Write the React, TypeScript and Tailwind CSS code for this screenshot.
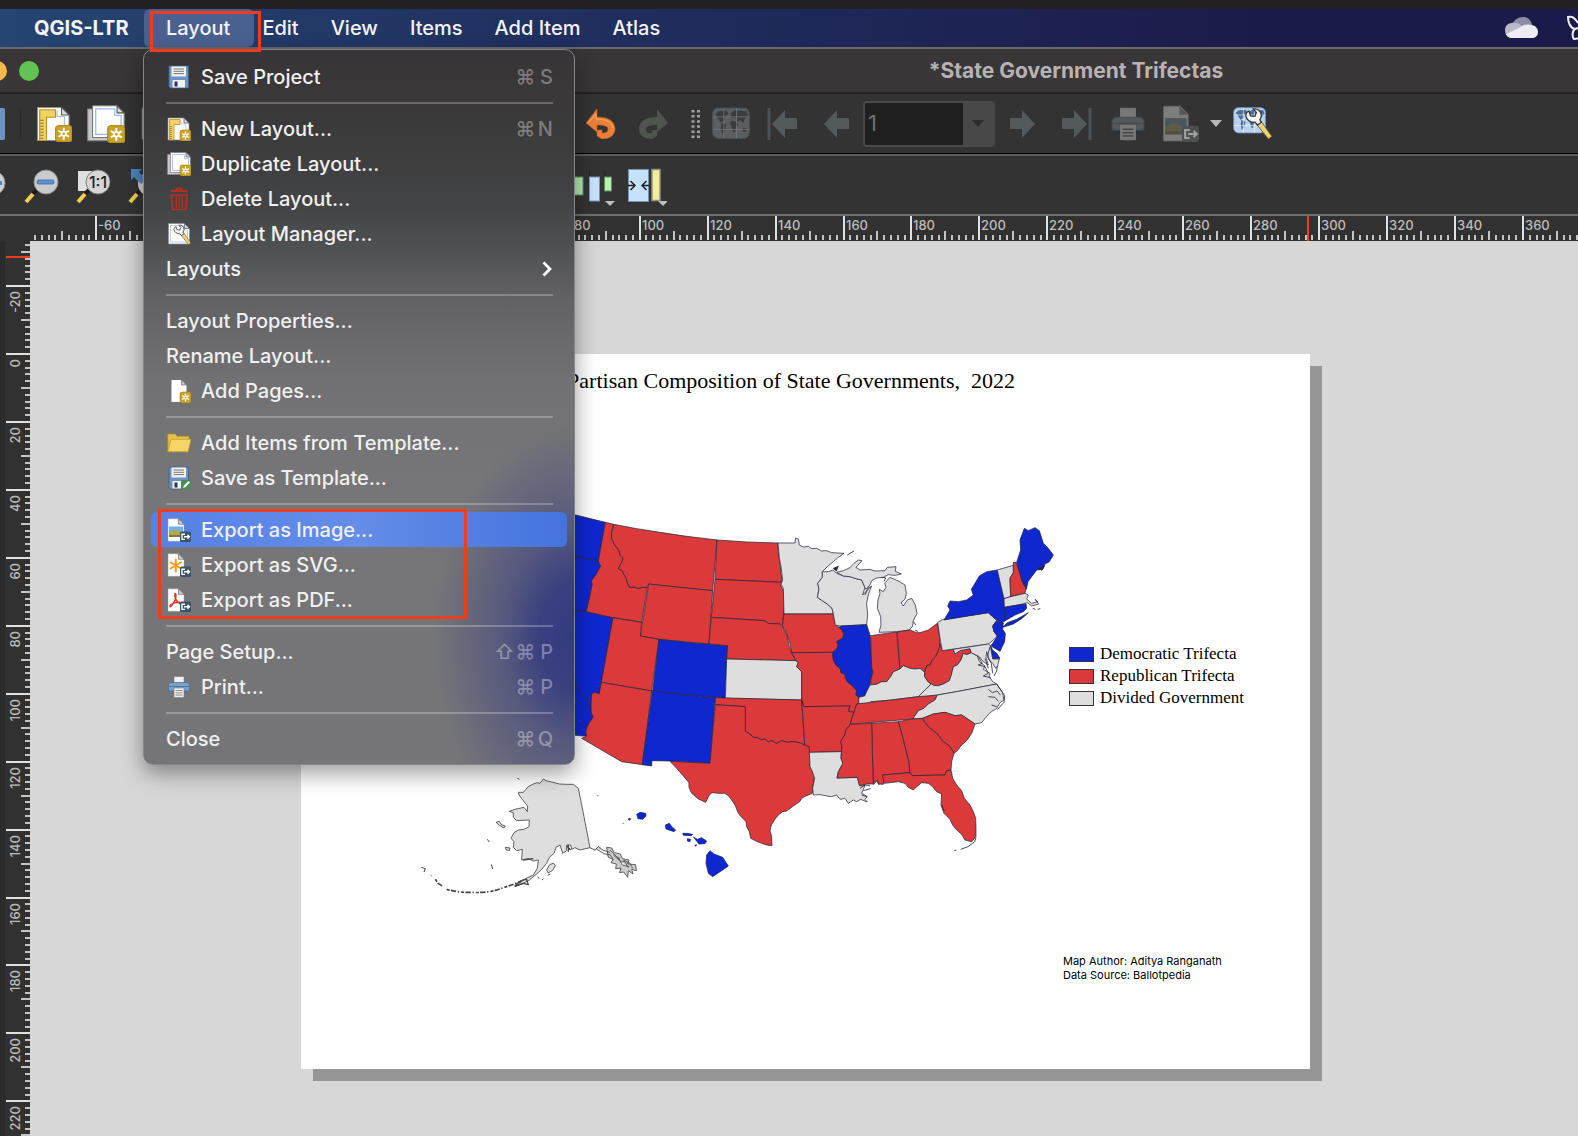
import React, { useEffect, useState } from "react";

type SvgProps = { className?: string; children?: React.ReactNode };

function Icon({ className = "size-6", children }: SvgProps) {
  return (
    <svg viewBox="0 0 24 24" className={className} aria-hidden="true">
      {children}
    </svg>
  );
}

function StarBadge() {
  return (
    <g>
      <rect x="13" y="13" width="11" height="11" rx="2" fill="#c9a227" stroke="#a98414" strokeWidth=".6" />
      <path d="M18.500 14.500v8M15 16.500l7 4M22 16.500l-7 4" stroke="#fff" strokeWidth="1.300" />
      <circle cx="18.500" cy="18.500" r="2" fill="#fff" />
      <circle cx="18.500" cy="18.500" r=".9" fill="#c9a227" />
    </g>
  );
}

function ExportBadge({ muted = false }: { muted?: boolean }) {
  return (
    <g>
      <rect x="13" y="13.500" width="11" height="10.500" rx="1.500" fill={muted ? "#4d4f50" : "#3b5468"} />
      <path
        d="M18 16.200h-3v5.200h3M17 18.800h5.500M20.500 16.800l2 2-2 2"
        fill="none"
        stroke={muted ? "#a0a0a0" : "#fff"}
        strokeWidth="1.400"
      />
    </g>
  );
}

function SaveIcon({ className, template = false }: { className?: string; template?: boolean }) {
  return (
    <Icon className={className}>
      <path d="M2 1h19.500v22H3.500L2 21.500z" fill="#6d93c3" stroke="#40608c" strokeWidth=".8" />
      <rect x="4.500" y="1.500" width="14.500" height="10" fill="#f2f2f2" />
      <path d="M6.500 4h10.500M6.500 6.300h10.500M6.500 8.600h10.500" stroke="#777" strokeWidth="1" />
      <rect x="5.500" y="15" width="12.500" height="7.500" fill="#f2f2f2" />
      <rect x="7.500" y="16.500" width="3" height="5" fill="#23395a" />
      {template && (
        <g>
          <rect x="14" y="14" width="10" height="10" rx="1.500" fill="#4c8a57" />
          <path d="M16 22l1-2.500 4.500-4.500 1.500 1.500-4.500 4.500z" fill="#fff" />
        </g>
      )}
    </Icon>
  );
}

function NewLayoutIcon({ className }: { className?: string }) {
  return (
    <Icon className={className}>
      <path d="M1 1h16l5 5v17H1z" fill="#fff" stroke="#8a8a8a" strokeWidth=".7" />
      <path d="M14 3v4h5v10" fill="none" stroke="#a9c3ee" strokeWidth=".8" />
      <path d="M17 1v5h5z" fill="#d8d8d8" stroke="#555" strokeWidth=".7" />
      <path d="M2.500 2.500h10.500v5H7v15.500H2.500z" fill="#f3d360" stroke="#b4912a" strokeWidth=".8" />
      <path d="M3 9.500h2M3 11.500h2M3 13.500h2M3 15.500h2M3 17.500h2M3 19.500h2M3 21.500h2" stroke="#8a6c14" strokeWidth=".7" />
      <StarBadge />
    </Icon>
  );
}

function DuplicateIcon({ className }: { className?: string }) {
  return (
    <Icon className={className}>
      <path d="M.5 2.500h17v20H.5z" fill="#c9c9c9" stroke="#888" strokeWidth=".7" />
      <path d="M3.500.5h15.500l4.500 4.500v15.500H3.500z" fill="#fff" stroke="#777" strokeWidth=".7" />
      <path d="M5.500 2.500h12v4h4v12h-16z" fill="none" stroke="#9db9ec" strokeWidth=".8" />
      <path d="M19 .5V5h4.500z" fill="#d8d8d8" stroke="#555" strokeWidth=".7" />
      <StarBadge />
    </Icon>
  );
}

function TrashIcon() {
  return (
    <Icon>
      <path d="M4 4h16.500M9 3.500l1.500-2h3.500l1.500 2" fill="none" stroke="#b5301f" strokeWidth="2" />
      <path d="M4.500 8h15.500l-1 14.500H5.500z" fill="none" stroke="#b5301f" strokeWidth="1.700" />
      <path d="M9.300 9v12M12.300 9v12M15.300 9v12" stroke="#b5301f" strokeWidth="1.400" />
    </Icon>
  );
}

function Wrench() {
  return (
    <g>
      <path d="M13.500 12.500l8 10 2.300-1.600-7.500-10.500z" fill="#ecd27a" stroke="#6b5a20" strokeWidth=".6" />
      <path
        d="M9 4.500l1 3.200 2.800.3 1-2.500-2-2.300c3-.4 5 1.300 5.200 4 0 1.300-.4 2.200-1 3l1 1.500-2.500 1.900-1.400-1.700C10 12 7.200 10.200 7 7.500c0-1.300.8-2.500 2-3z"
        fill="#f4f4f4"
        stroke="#333"
        strokeWidth=".8"
      />
    </g>
  );
}

function ManagerIcon({ className }: { className?: string }) {
  return (
    <Icon className={className}>
      <path d="M1.500 1.500h16l5 5v15.500h-21z" fill="#fff" stroke="#8a8a8a" strokeWidth=".7" />
      <path d="M3.500 3.500h13v4.500h4v12h-17z" fill="none" stroke="#a9c3ee" strokeWidth=".8" />
      <path d="M17.500 1.500v5h5z" fill="#d8d8d8" stroke="#555" strokeWidth=".7" />
      <Wrench />
    </Icon>
  );
}

function AddPagesIcon() {
  return (
    <Icon>
      <path d="M4.500 1h10l5 5v17h-15z" fill="#fff" />
      <path d="M14.500 1v5h5z" fill="#d0d0d0" stroke="#666" strokeWidth=".7" />
      <StarBadge />
    </Icon>
  );
}

function FolderIcon() {
  return (
    <Icon>
      <path d="M.8 20.500V3h7.500l2 2.300H22v3" fill="#e6c24d" stroke="#b28f25" strokeWidth=".8" />
      <path d="M.8 20.800L4 8.300h20l-3 12.500z" fill="#f4d566" stroke="#c19c2c" strokeWidth=".8" />
    </Icon>
  );
}

function ExportIcon({ kind, className, muted = false }: { kind: string; className?: string; muted?: boolean }) {
  return (
    <Icon className={className}>
      <path d="M1 .8h10.500l5.500 5.500v17H1z" fill={muted ? "#7d7d7d" : "#fff"} stroke={muted ? "#666" : "#999"} strokeWidth=".5" />
      <path d="M11.500.8v5.500H17z" fill={muted ? "#555" : "#d0d0d0"} stroke="#666" strokeWidth=".7" />
      {kind === "image" && (
        <g>
          <rect x="2" y="8.500" width="14" height="10.500" fill={muted ? "#4b565b" : "#6fb1e8"} />
          <path d="M2 14.500l5-3 4 1.500 5 1v5H2z" fill={muted ? "#5d5c4a" : "#b6a548"} />
          <path d="M2 17h14v2H2z" fill={muted ? "#4f5148" : "#76803c"} />
        </g>
      )}
      {kind === "svg" && (
        <path
          d="M8.800 6.500v12M3.600 9.500l10.400 6M14 9.500l-10.400 6"
          stroke="#f29a1b"
          strokeWidth="2"
          strokeLinecap="round"
        />
      )}
      {kind === "pdf" && (
        <path
          d="M8 5.500c2 0 .8 6-1.500 9.500-2 3.500-3.800 4.500-3.600 3 .4-2 5-4 9-3.800 3.500.3 3 2 1 1.500C9.500 14.500 7 8 8 5.500z"
          fill="none"
          stroke="#dc3422"
          strokeWidth="1.400"
        />
      )}
      <ExportBadge muted={muted} />
    </Icon>
  );
}

function PrintIcon({ className, muted = false }: { className?: string; muted?: boolean }) {
  const paper = muted ? "#787878" : "#f2f2f2";
  return (
    <Icon className={className}>
      <rect x="7" y="1.500" width="10" height="7" fill={paper} stroke="#777" strokeWidth=".6" />
      <path d="M3.500 7.500h17l2 2v6.500h-21V9.500z" fill={muted ? "#54585b" : "#7ba0cc"} stroke={muted ? "#484b4d" : "#466a97"} strokeWidth=".7" />
      <path d="M2 11.500h20" stroke={muted ? "#484b4d" : "#4f76a5"} strokeWidth="1" />
      <rect x="7" y="13" width="10" height="9.500" fill={paper} stroke="#777" strokeWidth=".6" />
      <path d="M8.500 15.500h7M8.500 17.800h7M8.500 20h7" stroke={muted ? "#444" : "#888"} strokeWidth="1" />
    </Icon>
  );
}

type Entry = { label: string; icon?: React.ReactNode; mods?: string; char?: string; sub?: boolean; active?: boolean };

const groups: Entry[][] = [
  [{ label: "Save Project", icon: <SaveIcon />, mods: "⌘", char: "S" }],
  [
    { label: "New Layout...", icon: <NewLayoutIcon />, mods: "⌘", char: "N" },
    { label: "Duplicate Layout...", icon: <DuplicateIcon /> },
    { label: "Delete Layout...", icon: <TrashIcon /> },
    { label: "Layout Manager...", icon: <ManagerIcon /> },
    { label: "Layouts", sub: true },
  ],
  [{ label: "Layout Properties..." }, { label: "Rename Layout..." }, { label: "Add Pages...", icon: <AddPagesIcon /> }],
  [
    { label: "Add Items from Template...", icon: <FolderIcon /> },
    { label: "Save as Template...", icon: <SaveIcon template /> },
  ],
  [
    { label: "Export as Image...", icon: <ExportIcon kind="image" />, active: true },
    { label: "Export as SVG...", icon: <ExportIcon kind="svg" /> },
    { label: "Export as PDF...", icon: <ExportIcon kind="pdf" /> },
  ],
  [
    { label: "Page Setup...", mods: "⇧⌘", char: "P" },
    { label: "Print...", icon: <PrintIcon />, mods: "⌘", char: "P" },
  ],
  [{ label: "Close", mods: "⌘", char: "Q" }],
];

function MenuItem({ item }: { item: Entry }) {
  return (
    <button
      role="menuitem"
      className={
        "flex h-[35px] w-full items-center gap-[10px] rounded-md pl-[15px] pr-[14px] text-left " +
        (item.active ? "bg-linear-to-r from-[#5681e6] via-[#648de8] to-[#4573dd]" : "")
      }
    >
      {item.icon && <span className="flex w-[25px] shrink-0 justify-center">{item.icon}</span>}
      <span className="flex-1 whitespace-nowrap">{item.label}</span>
      {item.char && (
        <span className="flex items-center text-white/35">
          {Array.from(item.mods ?? "").map((m) => (
            <span key={m} className="w-[21px] text-center">
              {m}
            </span>
          ))}
          <span className="w-[17px] text-right">{item.char}</span>
        </span>
      )}
      {item.sub && (
        <svg viewBox="0 0 12 16" className="h-4 w-3" aria-hidden="true">
          <path d="M2.500 1.500L9 8l-6.500 6.500" fill="none" stroke="#fff" strokeWidth="2.800" />
        </svg>
      )}
    </button>
  );
}

function LayoutMenu() {
  return (
    <div
      role="menu"
      className="absolute -left-[7px] top-10 z-20 w-[432px] rounded-[10px] border border-[#85858a] bg-[radial-gradient(ellipse_140px_210px_at_100%_82%,#343a80_0%,#3a407f_25%,rgba(75,78,128,0.7)_52%,rgba(119,119,121,0)_100%),linear-gradient(to_bottom,#383437_0%,#3b3a3a_10%,#434446_22%,#505153_28%,#626264_35%,#717173_46%,#767678_60%,#757577_100%)] px-[7px] pb-2 pt-[9px] text-[20px] font-medium leading-6 text-[#f0f0f0] shadow-[0_8px_22px_rgba(0,0,0,0.4)]"
    >
      {groups.map((g, i) => (
        <div key={i}>
          {i > 0 && <div role="separator" className="mb-[7px] ml-[15px] mr-[14px] mt-2 h-[2px] bg-white/25" />}
          <div className="relative">
            {g.map((item) => (
              <MenuItem key={item.label} item={item} />
            ))}
            {i === 4 && <div className="pointer-events-none absolute -top-[3px] left-[7px] h-[110px] w-[309px] border-3 border-[#ee3d1d]" />}
          </div>
        </div>
      ))}
    </div>
  );
}

function MenuBar() {
  return (
    <header className="flex h-[38px] items-center bg-linear-to-r from-[#264570] via-[#20305f] via-35% to-[#1b1b4b] to-80% text-[20px] font-medium leading-6 text-[#f4f4f6]">
      <button className="w-[150px] shrink-0 whitespace-nowrap pl-[34px] text-left font-bold">QGIS-LTR</button>
      <div className="relative flex h-full items-center">
        <div className="absolute -left-[6px] top-0 h-full w-[110px] rounded-md bg-[#4a6190]" />
        <button className="relative px-4" aria-expanded="true">
          Layout
        </button>
        <div className="absolute left-0 top-[2px] z-30 h-[41px] w-[111px] border-3 border-[#ee3d1d]" />
        <LayoutMenu />
      </div>
      {["Edit", "View", "Items", "Add Item", "Atlas"].map((m) => (
        <button key={m} className="whitespace-nowrap px-4">
          {m}
        </button>
      ))}
      <div className="ml-auto flex items-center gap-7">
        <svg viewBox="0 0 33 22" className="h-[22px] w-[33px]" aria-label="OneDrive">
          <path d="M7 9C8 3 13 0 18 0c5 0 8 3 9 8L17 14z" fill="#8b8ca5" />
          <path d="M7 6c4-1 8 1 10 3l10 7-20 5C2 21 0 17 0 13c0-4 3-7 7-7z" fill="#b9b9c8" />
          <path d="M16 10c3-3 8-3 11-2 4 1 6 4 6 7 0 4-3 6-6 6H7c-3 0-5-2-6-4z" fill="#ececf1" />
        </svg>
        <svg viewBox="0 0 12 26" className="h-[26px] w-3" aria-hidden="true">
          <path d="M12 8C9 3 5 1 2 2c0 5 2 11 7 12-3 2-3 8-1 10 2 0 3 0 4-1M9 14l3-1" fill="none" stroke="#f0f0f4" strokeWidth="2" />
        </svg>
      </div>
    </header>
  );
}

function Slot({ label, children, className = "w-[52px]" }: { label: string; children: React.ReactNode; className?: string }) {
  return (
    <button aria-label={label} className={"flex h-full shrink-0 items-center justify-center " + className}>
      {children}
    </button>
  );
}

function MapTile({ muted = false }: { muted?: boolean }) {
  const land = muted ? "#3a3d3f" : "#4a6c96";
  return (
    <g>
      <rect x=".5" y="2" width="23" height="19" rx="3.500" fill={muted ? "#5b5e60" : "#b9d2ef"} stroke={muted ? "#515456" : "#6f93bf"} strokeWidth=".6" />
      <path d="M2 6l2-2 5-.5 1.500 2-2 1.500-1 3-2 1-2-3zM6 11l3 1.500-.5 3-2 3.500-1-4zM12 5l2-1.500 8 .5 1 3-2.500 2-.5 2.500-2-2-2 1-2-3-2 1zM12 10l3.500.5 1 2-1.500 2-.5 3-1.500-1-.5-3-1-1zM19.500 14.500l2.500.5-.5 2-2.500-.5z" fill={land} />
      <path d="M7.500 2v19M15.500 2v19M.5 7.500h23M.5 15.500h23" stroke={muted ? "#75787a" : "#eef5fd"} strokeWidth=".5" />
    </g>
  );
}

function AtlasSettingsIcon() {
  return (
    <svg viewBox="0 0 40 38" className="h-[38px] w-10" aria-hidden="true">
      <g transform="translate(1 0) scale(1.380 1.330)">
        <MapTile />
      </g>
      <g transform="translate(3 -1) scale(1.550)">
        <Wrench />
      </g>
    </svg>
  );
}

function Arrow({ flip = false, bar = false }: { flip?: boolean; bar?: boolean }) {
  return (
    <svg viewBox="0 0 32 34" className={"h-[34px] w-8 " + (flip ? "-scale-x-100" : "")} aria-hidden="true">
      {bar && <path d="M2 1v32" stroke="#4d5154" strokeWidth="3" />}
      <path d="M5 17L18 3v8h12v11H18v9z" fill="#54595c" />
    </svg>
  );
}

function Caret() {
  return (
    <svg viewBox="0 0 12 7" className="h-[7px] w-3" aria-hidden="true">
      <path d="M0 0h12L6 7z" fill="currentColor" />
    </svg>
  );
}

function MainToolbar() {
  return (
    <div className="flex h-[60px] shrink-0 items-center border-b border-black bg-[#333]">
      <div className="flex h-full w-[575px] shrink-0 items-center overflow-hidden">
        <div className="h-8 w-[5px] rounded-r-xs bg-[#6d93c3]" />
        <div className="ml-[15px] mr-[7px] h-8 w-px bg-[#292929]" />
        <Slot label="New layout"><NewLayoutIcon className="size-9" /></Slot>
        <Slot label="Duplicate layout"><DuplicateIcon className="size-[38px]" /></Slot>
        <Slot label="Layout manager"><ManagerIcon className="size-9" /></Slot>
      </div>
      <Slot label="Undo">
        <svg viewBox="0 0 30 30" className="size-[30px]" aria-hidden="true">
          <path d="M0 14L11 0v8c11 0 18 4 18 12 0 6-5 10-13 10l-5-3v-6h5v3c4 0 6-1 6-4s-4-4-11-4v7z" fill="#e9803a" stroke="#c45f1e" strokeWidth=".6" />
          <path d="M2 14l8-9v5c10 0 16 3 17 9" fill="none" stroke="#f6ad78" strokeWidth="1" />
        </svg>
      </Slot>
      <Slot label="Redo">
        <svg viewBox="0 0 30 30" className="size-[30px] -scale-x-100" aria-hidden="true">
          <path d="M0 14L11 0v8c11 0 18 4 18 12 0 6-5 10-13 10l-5-3v-6h5v3c4 0 6-1 6-4s-4-4-11-4v7z" fill="#50544f" />
        </svg>
      </Slot>
      <div className="flex w-[26px] shrink-0 justify-end pr-1">
        <svg viewBox="0 0 10 28" className="h-7 w-[10px]" aria-hidden="true">
          <path d="M2 0v28M7.500 0v28" stroke="#a0a0a0" strokeWidth="3" strokeDasharray="2.500 2.600" />
        </svg>
      </div>
      <Slot label="Preview atlas"><Icon className="size-[38px]"><MapTile muted /></Icon></Slot>
      <Slot label="First feature"><Arrow bar /></Slot>
      <Slot label="Previous feature"><Arrow /></Slot>
      <div className="relative ml-0.5 flex h-[46px] w-[132px] shrink-0 overflow-hidden rounded-sm border-2 border-[#4a4a4a] bg-[#1f1f1f]">
        <select aria-label="Atlas page" className="w-full appearance-none bg-transparent px-[3px] text-[22px] text-[#6f6f6f]">
          <option>1</option>
        </select>
        <span className="pointer-events-none absolute inset-y-0 right-0 flex w-[30px] items-center justify-center bg-[#484848] text-[#2c2c2c]">
          <Caret />
        </span>
      </div>
      <div className="w-[3px] shrink-0" />
      <Slot label="Next feature"><Arrow flip /></Slot>
      <Slot label="Last feature"><Arrow flip bar /></Slot>
      <Slot label="Print atlas"><PrintIcon className="size-9" muted /></Slot>
      <Slot label="Export atlas"><ExportIcon kind="image" className="size-[37px]" muted /></Slot>
      <Slot label="Export options" className="w-5 text-[#b8b8b8]"><Caret /></Slot>
      <Slot label="Atlas settings"><AtlasSettingsIcon /></Slot>
    </div>
  );
}

function Lens({ children }: { children: React.ReactNode }) {
  return (
    <svg viewBox="0 0 36 36" className="size-9" aria-hidden="true">
      {children}
    </svg>
  );
}

function NavToolbar() {
  return (
    <div className="flex h-[58px] shrink-0 items-center bg-[#333] pt-[3px]">
      <div className="flex h-full w-[575px] shrink-0 items-center overflow-hidden">
        <div className="w-[15px] shrink-0">
          <svg viewBox="0 0 15 36" className="h-9 w-[15px]" aria-hidden="true">
            <circle cx="-7" cy="14" r="12" fill="#d0d0d0" stroke="#8b8b8b" />
            <path d="M-14 14H2" stroke="#4b83c4" strokeWidth="4" />
          </svg>
        </div>
        <Slot label="Zoom out">
          <Lens>
            <path d="M14 21l-4 4" stroke="#1c1c1c" strokeWidth="4" />
            <path d="M10 25l-7 8" stroke="#f0cf4e" strokeWidth="4" />
            <circle cx="23" cy="13" r="12" fill="#c9cacb" stroke="#8d8d8d" />
            <rect x="14" y="11" width="17" height="4" rx="1.500" fill="#5d92cd" stroke="#3b6ca3" strokeWidth=".8" />
          </Lens>
        </Slot>
        <Slot label="Zoom to 100%">
          <Lens>
            <path d="M3 2h14v20H3z" fill="#e0e0e0" />
            <path d="M14 21l-4 4" stroke="#1c1c1c" strokeWidth="4" />
            <path d="M10 25l-7 8" stroke="#f0cf4e" strokeWidth="4" />
            <circle cx="23" cy="13" r="12" fill="#d6d6d6" stroke="#7d7d7d" />
            <text x="23" y="19" textAnchor="middle" fontSize="16" fontWeight="500" fill="#222">1:1</text>
          </Lens>
        </Slot>
        <Slot label="Zoom full">
          <Lens>
            <path d="M14 21l-4 4" stroke="#1c1c1c" strokeWidth="4" />
            <path d="M10 25l-7 8" stroke="#f0cf4e" strokeWidth="4" />
            <circle cx="23" cy="15" r="12" fill="#d0d0d0" />
            <path d="M4-1h12l-4 4 7 7-5 5-7-7-3 3z" fill="#4f86c0" />
          </Lens>
        </Slot>
      </div>
      <Slot label="Distribute items" className="w-11">
        <svg viewBox="0 0 44 38" className="h-[38px] w-11" aria-hidden="true">
          <path d="M14.500 2v34M30 2v20" stroke="#222" strokeWidth="1" />
          <rect x="-4" y="9" width="12" height="18" fill="#b3e8b0" stroke="#5d8f5d" />
          <rect x="14.500" y="9" width="10" height="24" fill="#c5e2fa" stroke="#7296b8" />
          <rect x="29.500" y="9" width="7" height="14" fill="#b3f5b0" stroke="#5d8f5d" />
          <path d="M30 33h10l-5 5z" fill="#c0c0c0" />
        </svg>
      </Slot>
      <Slot label="Resize items" className="w-[52px]">
        <svg viewBox="0 0 44 38" className="h-[38px] w-11" aria-hidden="true">
          <rect x="5.500" y="1.500" width="20" height="32" fill="#c5e2fa" stroke="#7296b8" />
          <path d="M5 17.500h7M7.500 13l4.500 4.500-4.500 4.500M26 17.500h-7M23.500 13L19 17.500l4.500 4.500" fill="none" stroke="#222" strokeWidth="1.500" />
          <rect x="29" y="1.500" width="8" height="31" fill="#f0f09a" stroke="#9a8f86" strokeWidth="1.500" />
          <path d="M35 33h10l-5 5z" fill="#c0c0c0" />
        </svg>
      </Slot>
    </div>
  );
}

const SCALE = 3.397;

function useWindowSize() {
  const [size, setSize] = useState({ width: window.innerWidth, height: window.innerHeight });
  useEffect(() => {
    const update = () => setSize({ width: window.innerWidth, height: window.innerHeight });
    window.addEventListener("resize", update);
    return () => window.removeEventListener("resize", update);
  }, []);
  return size;
}

function ticks(from: number, to: number) {
  const out: number[] = [];
  for (let v = from; v <= to; v += 2) out.push(v);
  return out;
}

function HorizontalRuler() {
  const { width } = useWindowSize();
  return (
    <div className="h-[25px] shrink-0 overflow-hidden bg-[#313131] pl-[6px]">
      <svg className="h-[25px] w-full" aria-label="Horizontal ruler">
        {ticks(-78, (width - 300) / SCALE).map((v) => {
          const x = Math.round(293 + v * SCALE);
          const major = v % 20 === 0;
          const top = major ? 0 : v % 10 === 0 ? 15 : 19;
          return (
            <g key={v}>
              <rect x={x} y={top} width={2} height={24 - top} fill={major ? "#e0e0e0" : "#c4c4c4"} />
              {major && (
                <text x={x + 3} y={14} fontSize={13} fontWeight={500} fill="#bdbdbd">
                  {v}
                </text>
              )}
            </g>
          );
        })}
        <rect x="1301" y="0" width="2" height="25" fill="#ee3d1d" />
      </svg>
    </div>
  );
}

function VerticalRuler() {
  const { height } = useWindowSize();
  return (
    <div className="w-[30px] shrink-0 overflow-hidden border-l-[5px] border-[#2b2b2b] bg-[#313131]">
      <svg className="h-full w-[25px]" aria-label="Vertical ruler">
        {ticks(-32, (height - 354) / SCALE).map((v) => {
          const y = Math.round(112 + v * SCALE);
          const major = v % 20 === 0;
          const left = major ? 1 : v % 10 === 0 ? 16 : 20;
          return (
            <g key={v}>
              <rect x={left} y={y} width={25 - left} height={2} fill={major ? "#e0e0e0" : "#c4c4c4"} />
              {major && (
                <text transform={`translate(15 ${y + 6}) rotate(-90)`} textAnchor="end" fontSize={13} fontWeight={500} fill="#bdbdbd">
                  {v}
                </text>
              )}
            </g>
          );
        })}
        <rect x="1" y="15" width="24" height="2" fill="#ee3d1d" />
      </svg>
    </div>
  );
}

const DEM = "#0f27cf";
const REP = "#dc3a3a";
const DIV = "#dedede";

const west: [string, string][] = [
  [DEM, "0,35 47,45 136,67 115,183 47,170 -40,150"],
  [DEM, "-60,148 47,170 115,183 122,198 108,224 100,236 94,243 97,252 79,335 47,330 -60,305"],
  [DEM, "-60,305 47,330 79,335 159,353 124,547 118,581 104,577 95,582 93,618 47,557 -60,420"],
  [DEM, "-60,420 47,557 93,618 94,640 100,650 88,668 82,680 77,695 80,709 47,706 -60,700"],
  [REP, "136,67 161,73 158,88 154,100 156,118 165,136 176,150 180,165 189,175 184,190 175,206 187,212 191,222 199,236 203,250 209,262 222,261 235,265 250,262 262,262 245,367 159,353 79,335 97,252 94,243 108,224 122,198 115,183"],
  [REP, "161,73 230,86 300,97 380,109 471,120 458,272 360,263 266,252 262,262 250,262 235,265 222,261 209,262 203,250 199,236 191,222 187,212 175,206 184,190 189,175 180,165 176,150 165,136 156,118 154,100 158,88"],
  [REP, "266,252 458,272 447,432 297,418 241,408"],
  [REP, "159,353 245,367 241,408 297,418 275,573 124,547"],
  [REP, "124,547 275,573 247,794 185,785 65,715 80,709 77,695 82,680 88,668 100,650 94,640 93,618 95,582 104,577 118,581"],
  [DEM, "297,418 400,429 503,437 495,595 380,585 278,573"],
  [DEM, "277,573 380,585 466,593 450,790 330,783 276,782 275,798 247,794"],
  [REP, "471,120 560,126 654,129 655,155 660,190 663,220 668,247 465,238"],
  [REP, "465,238 668,247 662,256 671,275 671,345 667,375 658,372 640,371 625,370 612,362 454,352"],
  [REP, "454,352 612,362 625,370 640,371 658,372 668,380 676,395 682,410 688,440 695,460 708,482 500,477 503,437 447,432"],
  [DIV, "500,477 708,482 715,486 710,500 725,515 725,600 496,595"],
  [REP, "466,593 725,600 730,670 734,735 718,728 700,725 682,727 665,722 650,730 635,722 625,726 615,717 602,719 592,713 580,712 570,702 556,694 556,620 466,614"],
  [REP, "466,614 556,620 556,694 570,702 580,712 592,713 602,719 615,717 625,726 635,722 650,730 665,722 682,727 700,725 718,728 734,735 748,740 750,797 760,815 764,830 759,855 757,880 738,888 725,895 720,904 700,918 680,933 668,935 655,945 643,960 634,975 630,992 635,1010 636,1037 620,1035 605,1030 590,1024 572,1015 568,995 560,980 558,965 545,952 535,940 525,915 515,900 505,887 495,880 475,880 456,878 448,885 437,907 415,897 395,880 387,862 387,848 370,828 350,805 330,784 450,790"],
];

const east: [string, string][] = [
  [DIV, "24,129 75,129 77,114 85,117 88,135 100,141 115,139 125,146 140,145 155,153 170,152 185,158 222,160 205,172 190,185 172,200 157,215 157,232 143,250 147,268 142,292 158,303 172,312 186,325 190,342 42,342 40,265 33,252 38,240 33,200 28,175"],
  [REP, "42,342 190,342 196,372 207,382 216,390 222,402 218,415 200,425 205,435 200,448 188,457 65,458 60,430 52,405 45,388 37,378"],
  [REP, "65,458 188,457 190,480 198,495 212,507 213,518 225,522 226,533 232,545 250,560 260,572 258,585 267,592 266,610 258,615 252,637 235,634 240,618 102,620 95,600 95,515 80,500 85,488 78,482"],
  [REP, "95,600 102,620 240,618 235,634 252,637 247,650 240,675 228,690 224,705 212,725 216,740 214,755 118,757 118,740 104,735 100,670"],
  [DIV, "118,757 214,755 213,775 219,790 205,815 201,834 262,832 268,850 272,858 285,856 280,868 275,880 292,890 285,898 292,906 272,898 260,905 250,900 235,910 225,895 210,898 200,885 185,890 170,888 150,884 130,885 128,865 134,835 126,812 120,800"],
  [DIV, "157,215 175,215 190,210 200,220 220,228 240,230 258,236 275,240 285,262 278,285 292,270 305,258 296,280 290,310 293,345 290,374 215,378 196,376 190,342 186,325 172,312 158,303 142,292 147,268 143,250 157,232"],
  [DIV, "200,217 220,212 240,203 252,190 265,180 276,182 258,202 270,210 300,208 315,213 345,212 352,202 378,200 376,214 394,222 375,226 355,224 340,232 320,234 305,242 300,255 287,268 275,240 258,236 240,230 220,228"],
  [DIV, "327,397 333,375 332,350 322,325 324,300 330,280 328,268 340,275 348,262 344,250 360,232 385,243 405,255 409,280 405,298 393,308 400,318 412,300 425,295 436,315 441,340 430,362 428,378 418,390 380,395"],
  [DEM, "215,378 290,374 300,405 303,450 305,500 309,518 303,535 300,555 290,575 284,588 267,592 258,585 260,572 250,560 232,545 226,533 225,522 213,518 212,507 198,495 190,480 188,457 200,448 205,435 200,425 218,415 222,402 216,390 207,382"],
  [REP, "302,407 380,396 390,507 370,515 362,530 350,545 335,545 320,553 302,553 303,535 309,518 305,500"],
  [REP, "382,396 420,390 440,398 450,398 475,390 502,370 510,415 508,445 497,470 486,482 480,495 470,497 464,517 450,505 435,507 420,505 400,497 390,507"],
  [DIV, "267,592 284,588 290,575 300,555 320,553 335,545 350,545 362,530 370,515 390,507 400,497 420,505 435,507 450,505 464,517 464,530 475,546 484,552 460,575 445,590 365,600 302,605 300,610 266,612"],
  [REP, "260,612 302,607 365,600 445,590 502,585 495,600 475,612 462,625 445,632 428,657 330,665 241,673 247,650 252,637"],
  [REP, "510,430 517,452 550,448 555,462 570,452 585,448 600,446 604,458 590,464 580,460 573,480 562,495 550,500 544,525 538,542 520,552 505,557 490,556 475,546 464,530 464,517 470,497 480,495 486,482 497,470 508,445"],
  [DIV, "445,590 460,575 484,552 490,556 505,557 520,552 538,542 544,525 550,500 562,495 573,480 580,460 590,464 604,458 622,468 628,485 645,498 640,508 660,520 658,530 668,545 680,552 560,575 502,585"],
  [DIV, "502,585 560,575 680,552 698,578 702,600 690,608 680,625 660,638 645,655 635,668 615,672 575,645 555,647 525,637 490,642 458,655 428,657 445,632 462,625 475,612 495,600"],
  [REP, "458,655 490,642 525,637 555,647 575,645 615,672 605,700 590,722 575,735 562,752 552,760 540,740 520,725 500,700 480,685 465,668"],
  [REP, "385,665 428,657 458,655 465,668 480,685 500,700 520,725 540,740 552,760 545,785 543,810 530,812 525,825 427,827 418,815 416,785 400,720"],
  [REP, "305,670 385,665 400,720 416,785 420,818 337,825 343,842 340,853 325,852 322,840 310,850 307,760"],
  [REP, "241,673 305,670 307,760 310,852 290,852 268,857 262,832 201,834 205,815 219,790 213,775 216,740 212,725 224,705 228,690"],
  [REP, "337,825 420,818 427,827 525,825 530,812 543,810 548,835 560,855 575,872 583,895 600,915 610,935 617,955 618,985 618,1010 605,1025 585,1020 575,1003 560,990 548,975 540,958 522,940 513,915 515,882 500,875 488,860 475,850 455,848 440,860 430,870 415,862 405,850 385,845 343,850"],
  [DIV, "503,367 520,358 655,338 668,350 680,362 668,378 672,395 682,408 670,420 655,432 517,452 510,415"],
  [DEM, "522,360 540,330 533,318 540,303 565,305 590,300 610,285 604,268 615,250 628,228 650,215 682,210 690,245 702,290 703,320 706,362 695,370 668,350 655,338"],
  [DEM, "698,382 712,368 740,358 775,338 755,356 730,372"],
  [DEM, "680,362 700,370 698,388 706,400 704,425 690,454 678,447 663,438 682,408 672,395 668,378"],
  [DEM, "661,437 668,450 680,460 690,475 668,477"],
  [DIV, "550,448 655,432 661,437 668,477 688,477 683,498 677,505 668,490 658,480 650,455 648,472 655,495 640,485 628,470 604,458 600,446 570,452 555,462"],
  [DIV, "682,210 730,196 730,218 720,235 722,290 702,296 690,245"],
  [REP, "730,187 738,187 748,215 757,245 768,262 765,280 722,290 720,235 730,218"],
  [DEM, "740,187 752,150 750,120 763,85 775,92 795,83 808,92 820,130 835,145 850,165 838,185 825,192 818,208 800,210 785,230 774,245 769,268 757,245"],
  [DIV, "702,296 722,290 765,280 775,285 770,297 785,310 803,305 795,298 806,312 785,318 772,308 750,314 703,322"],
  [DEM, "703,322 750,314 768,312 770,325 760,335 735,345 706,362"],
];

const alaska =
  "357,105 355,97 370,97 385,80 400,72 412,68 420,70 430,57 438,62 455,66 478,72 500,73 520,73 535,85 552,170 570,263 540,270 525,263 515,268 512,255 500,255 500,272 488,280 480,255 468,262 462,280 448,292 440,310 425,328 410,342 388,360 370,370 345,380 375,357 400,345 412,325 415,300 400,303 385,296 365,300 367,268 350,272 340,262 342,245 333,235 342,218 355,210 372,208 387,200 388,180 350,182 340,172 340,158 328,154 345,148 372,142 382,155 383,138 372,125";

const hawaii = [
  "710,163 720,157 737,160 738,168 728,178 714,176",
  "796,195 808,190 816,201 827,210 822,215 798,207",
  "848,220 862,220 878,223 874,227 850,226",
  "862,236 872,238 870,245 862,243",
  "881,232 892,238 905,233 920,243 915,251 897,252",
  "884,256 889,254 888,259",
  "920,285 930,272 942,282 968,292 985,318 965,332 938,350 925,340 918,310",
  "685,177 690,174 692,178 687,181",
];

function UsMap() {
  const line = "#25253a";
  return (
    <svg viewBox="301 354 1009 715" className="absolute inset-0 size-full" aria-label="Map of partisan composition of state governments">
      <g transform="translate(560 500) scale(.33333)" stroke={line} strokeWidth="2.200" strokeLinejoin="round">
        {west.map(([fill, points], i) => (
          <polygon key={i} fill={fill} points={points} />
        ))}
      </g>
      <g transform="translate(770 500) scale(.33333)" stroke={line} strokeWidth="2.200" strokeLinejoin="round">
        {east.map(([fill, points], i) => (
          <polygon key={i} fill={fill} points={points} />
        ))}
        <path
          d="M232,165l20,-12M285,285l8,-20 8,-5M335,232l12,2 -5,10M435,390l10,5M430,365l8,10M625,470l12,20 -12,5 20,5 10,20 -15,8 22,5M660,440l-8,30 12,20 4,30M645,475l10,30M682,498l-2,15 -8,15M655,568l12,10 14,-5 10,12M655,590l20,2 10,12M665,615l15,5M680,552l24,35 -2,20 -20,22M270,865l15,-10 15,2M280,872l22,-6M275,885l15,5M310,855l10,-12 8,12M572,1048l22,-8 20,-15 4,-12M553,1052l6,-2M788,325l8,3M803,328l8,-2M515,915l8,18"
          fill="none"
          strokeWidth="2.500"
        />
        <path d="M190,205l15,-6 -6,14z" fill={line} />
        <path d="M804,205l20,-8 -8,14z" fill={line} />
      </g>
      <g transform="translate(400 760) scale(.33333)" stroke="#444" strokeWidth="2.500" strokeLinejoin="round">
        <polygon fill={DIV} points={alaska} />
        <path
          d="M570,263l15,8 10,-12 15,12 20,6M590,268l25,14 15,2 10,15M620,262l15,2 8,14 18,4 6,14 20,4 -4,12 24,2 2,18 -14,-4 4,14 -14,-10 -2,20 -12,-16 -12,2 4,-14 -16,2 2,-14 -16,-4 6,-10 -14,-6z M640,285l20,18 15,2 10,18M655,290l12,25 20,5M670,300l20,10 8,15M630,270l30,30"
          fill="#ccc"
        />
        <path d="M440,330l8,-15 12,-6 6,8 -8,14 -14,8zM288,187l10,-3 6,10 12,4 -4,6 -14,-8zM316,262l14,2 -2,8 -10,-3z" fill={DIV} />
        <path d="M345,378q15,-20 35,-20l5,16 -15,-4zM500,258l12,12M505,255v20M370,300l30,-4" fill="none" strokeWidth="4" />
        <path d="M64,322l12,4 -4,10M92,346l3,2M262,238l6,8M274,313l4,14M352,55l6,3M592,107h3M668,190h3M413,350l4,6M426,360l4,-3M443,346l8,-4" fill="none" strokeWidth="3" />
        <path d="M106,358l8,12 16,10M140,388q35,10 70,9q60,3 95,-12l40,-14 20,-8" fill="none" strokeWidth="5" strokeDasharray="9 4 16 5 4 6" />
      </g>
      <g transform="translate(400 760) scale(.33333)" fill={DEM} stroke="#101d70" strokeWidth="2">
        {hawaii.map((points) => (
          <polygon key={points} points={points} />
        ))}
      </g>
    </svg>
  );
}

const legend = [
  { label: "Democratic Trifecta", swatch: "bg-[#0f27cf]" },
  { label: "Republican Trifecta", swatch: "bg-[#dc3a3a]" },
  { label: "Divided Government", swatch: "bg-[#dedede]" },
];

function PaperPage() {
  return (
    <article className="relative ml-[271px] mt-[113px] h-[715px] w-[1009px] bg-white text-black shadow-[12px_12px_0_#969696]">
      <UsMap />
      <h2 className="absolute right-[295px] top-[15px] whitespace-pre font-['Liberation_Serif',serif] text-[22px] leading-6">
        Partisan Composition of State Governments,  2022
      </h2>
      <ul className="absolute left-[768px] top-[289px] font-['Liberation_Serif',serif] text-[17px] leading-[22px]">
        {legend.map((l) => (
          <li key={l.label} className="flex items-center gap-[6px] whitespace-nowrap">
            <span className={"h-[15px] w-[25px] border border-[#333] " + l.swatch} />
            {l.label}
          </li>
        ))}
      </ul>
      <p className="absolute left-[762px] top-[600px] whitespace-nowrap text-[11px] leading-[14px]">
        Map Author: Aditya Ranganath
        <br />
        Data Source: Ballotpedia
      </p>
    </article>
  );
}

export default function App() {
  return (
    <div className="flex h-screen flex-col overflow-hidden bg-[#d7d7d7] font-['Inter',sans-serif]">
      <div className="h-[9px] shrink-0 bg-[#231f22]" />
      <div className="relative z-10 shrink-0">
        <MenuBar />
      </div>
      <div className="flex h-[47px] shrink-0 items-center overflow-hidden border-b-2 border-t-2 border-b-[#232122] border-t-[#6b6869] bg-[#3a3638]">
        <div className="flex w-[574px] shrink-0 items-center">
          <button aria-label="Minimize" className="-ml-[13px] size-5 rounded-full bg-[#f5b94a]" />
          <button aria-label="Zoom" className="ml-3 size-5 rounded-full bg-[#5fc454]" />
        </div>
        <h1 className="flex-1 whitespace-nowrap text-center text-[21px] font-bold leading-6 text-[#b7b3b5]">*State Government Trifectas</h1>
      </div>
      <MainToolbar />
      <div className="h-[2px] shrink-0 bg-[#5c5c5c]" />
      <NavToolbar />
      <div className="h-[2px] shrink-0 bg-[#707070]" />
      <HorizontalRuler />
      <div className="flex min-h-0 flex-1">
        <VerticalRuler />
        <main className="min-w-0 flex-1 overflow-hidden">
          <PaperPage />
        </main>
      </div>
    </div>
  );
}
